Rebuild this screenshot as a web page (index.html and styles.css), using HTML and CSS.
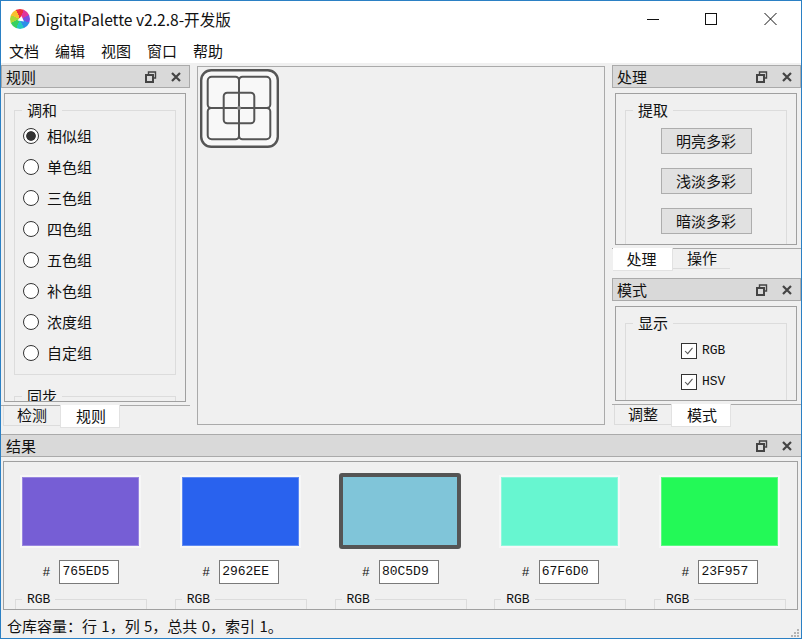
FILE: index.html
```html
<!DOCTYPE html>
<html lang="zh-CN">
<head>
    <meta charset="UTF-8">
    <title>DigitalPalette v2.2.8-开发版</title>
    <link rel="stylesheet" href="styles.css">
</head>
<body>
<div class="window">
    <header class="titlebar">
        <div class="app-icon"><svg viewBox="0 0 20 20" width="20" height="20"><path d="M11.5 7L14 12.5L7.5 11.5Z" fill="#fff"/></svg></div>
        <span class="app-title">DigitalPalette v2.2.8-开发版</span>
        <div class="win-btns">
            <svg viewBox="0 0 58 20" width="58" height="20"><path d="M0 10.5H12" stroke="#111" fill="none"/></svg>
            <svg viewBox="0 0 59 20" width="59" height="20"><rect x="0.5" y="4.5" width="11" height="11" stroke="#111" fill="none"/></svg>
            <svg viewBox="0 0 13 20" width="13" height="20"><path d="M0.5 4L12.5 16M12.5 4L0.5 16" stroke="#111" fill="none"/></svg>
        </div>
    </header>
    <nav class="menubar">
        <span>文档</span><span>编辑</span><span>视图</span><span>窗口</span><span>帮助</span>
    </nav>

    <main class="workspace">
        <section class="dock">
            <div class="dock-title"><span>规则</span>
                <svg class="dock-btn" viewBox="0 0 36 12" width="36" height="12"><use href="#dock-icons"/></svg>
            </div>
            <div class="panel panel-rules">
                <fieldset class="group group-rules">
                    <legend>调和</legend>
                    <label class="radio checked"><i></i>相似组</label>
                    <label class="radio"><i></i>单色组</label>
                    <label class="radio"><i></i>三色组</label>
                    <label class="radio"><i></i>四色组</label>
                    <label class="radio"><i></i>五色组</label>
                    <label class="radio"><i></i>补色组</label>
                    <label class="radio"><i></i>浓度组</label>
                    <label class="radio"><i></i>自定组</label>
                </fieldset>
                <fieldset class="group"><legend>同步</legend></fieldset>
            </div>
            <div class="tabs tabs-left">
                <span class="tab">检测</span><span class="tab active">规则</span>
            </div>
        </section>

        <section class="canvas">
            <svg class="selector" viewBox="0 0 80 80" width="80" height="80">
                <rect x="1.2" y="1.2" width="76.6" height="76.6" rx="10" fill="#f8f8f8" stroke="#555" stroke-width="2.4"/>
                <g fill="none" stroke="#555" stroke-width="2">
                    <path d="M39 39H11.2a3.5 3.5 0 0 1-3.5-3.5V11.7a4 4 0 0 1 4-4H35.5a3.5 3.5 0 0 1 3.5 3.5Z"/>
                    <path d="M39 39V11.2a3.5 3.5 0 0 1 3.5-3.5H66.3a4 4 0 0 1 4 4V35.5a3.5 3.5 0 0 1-3.5 3.5Z"/>
                    <path d="M39 39H66.8a3.5 3.5 0 0 1 3.5 3.5V66.3a4 4 0 0 1-4 4H42.5a3.5 3.5 0 0 1-3.5-3.5Z"/>
                    <path d="M39 39V66.8a3.5 3.5 0 0 1-3.5 3.5H11.7a4 4 0 0 1-4-4V42.5a3.5 3.5 0 0 1 3.5-3.5Z"/>
                    <rect x="23.7" y="23.7" width="30.6" height="30.6" rx="3.5"/>
                </g>
                <circle cx="39" cy="39" r="2" fill="#888"/>
            </svg>
        </section>

        <section class="dock dock-right">
            <div class="dock-title"><span>处理</span>
                <svg class="dock-btn" viewBox="0 0 36 12" width="36" height="12"><use href="#dock-icons"/></svg>
            </div>
            <div class="panel panel-process">
                <fieldset class="group group-fill">
                    <legend>提取</legend>
                    <div class="btn-stack">
                        <button class="btn">明亮多彩</button>
                        <button class="btn">浅淡多彩</button>
                        <button class="btn">暗淡多彩</button>
                    </div>
                </fieldset>
            </div>
            <div class="tabs tabs-right-top">
                <span class="tab active">处理</span><span class="tab">操作</span>
            </div>

            <div class="dock-title dock-title-second"><span>模式</span>
                <svg class="dock-btn" viewBox="0 0 36 12" width="36" height="12"><use href="#dock-icons"/></svg>
            </div>
            <div class="panel panel-mode">
                <fieldset class="group group-fill">
                    <legend>显示</legend>
                    <div class="check-stack">
                        <label class="check"><svg viewBox="0 0 16 16" width="16" height="16"><path d="M3.5 8L6.5 11L12 4.5" fill="none" stroke="#555" stroke-width="1.2"/></svg>RGB</label>
                        <label class="check"><svg viewBox="0 0 16 16" width="16" height="16"><path d="M3.5 8L6.5 11L12 4.5" fill="none" stroke="#555" stroke-width="1.2"/></svg>HSV</label>
                    </div>
                </fieldset>
            </div>
            <div class="tabs tabs-right-bottom">
                <span class="tab">调整</span><span class="tab active">模式</span>
            </div>
        </section>
    </main>

    <section class="results">
        <div class="dock-title dock-title-wide"><span>结果</span>
            <svg class="dock-btn" viewBox="0 0 36 12" width="36" height="12"><use href="#dock-icons"/></svg>
        </div>
        <div class="panel panel-results">
            <div class="color-col">
                <div class="swatch-wrap"><div class="swatch sw-1"></div></div>
                <div class="hex-row"><span>#</span><span class="hex">765ED5</span></div>
                <fieldset class="group group-rgb"><legend>RGB</legend></fieldset>
            </div>
            <div class="color-col">
                <div class="swatch-wrap"><div class="swatch sw-2"></div></div>
                <div class="hex-row"><span>#</span><span class="hex">2962EE</span></div>
                <fieldset class="group group-rgb"><legend>RGB</legend></fieldset>
            </div>
            <div class="color-col">
                <div class="swatch-wrap"><div class="swatch sw-3 selected"></div></div>
                <div class="hex-row"><span>#</span><span class="hex">80C5D9</span></div>
                <fieldset class="group group-rgb"><legend>RGB</legend></fieldset>
            </div>
            <div class="color-col">
                <div class="swatch-wrap"><div class="swatch sw-4"></div></div>
                <div class="hex-row"><span>#</span><span class="hex">67F6D0</span></div>
                <fieldset class="group group-rgb"><legend>RGB</legend></fieldset>
            </div>
            <div class="color-col">
                <div class="swatch-wrap"><div class="swatch sw-5"></div></div>
                <div class="hex-row"><span>#</span><span class="hex">23F957</span></div>
                <fieldset class="group group-rgb"><legend>RGB</legend></fieldset>
            </div>
        </div>
    </section>

    <footer class="statusbar">
        <span>仓库容量：行 1，列 5，总共 0，索引 1。</span>
        <svg class="grip" viewBox="0 0 10 10" width="10" height="10" fill="#b4b4b4">
            <rect x="7" y="1" width="2" height="2"/>
            <rect x="4" y="4" width="2" height="2"/><rect x="7" y="4" width="2" height="2"/>
            <rect x="1" y="7" width="2" height="2"/><rect x="4" y="7" width="2" height="2"/><rect x="7" y="7" width="2" height="2"/>
        </svg>
    </footer>
</div>

<svg width="0" height="0" class="defs">
    <g id="dock-icons" fill="none" stroke="#444">
        <path d="M3.5 3V1H10.5V7H8.5" stroke-width="1.4"/>
        <rect x="1" y="4" width="7" height="7" stroke-width="2"/>
        <path d="M27 2L35 10M35 2L27 10" stroke-width="2.2"/>
    </g>
</svg>
</body>
</html>
```

FILE: styles.css
```css
* {
    box-sizing: border-box;
}
html, body {
    margin: 0;
    padding: 0;
}
body {
    width: 802px;
    height: 639px;
    overflow: hidden;
    font-family: "Noto Sans CJK SC", "Noto Sans", sans-serif;
    font-size: 15px;
    color: #111;
}
.defs {
    position: absolute;
}
.window {
    width: 802px;
    height: 639px;
    display: flex;
    flex-direction: column;
    background-color: #f0f0f0;
    border: 1px solid #2b80c4;
    overflow: hidden;
}

/* title and menu */
.titlebar {
    height: 38px;
    flex: none;
    display: flex;
    align-items: center;
    padding-left: 9px;
    padding-bottom: 2px;
    background-color: #fff;
}
.app-icon {
    width: 20px;
    height: 20px;
    margin-right: 5px;
    border-radius: 50%;
    background: conic-gradient(#ee2f3c 0 22deg, #e0359c 22deg 67deg, #7a4fe0 67deg 112deg, #2d8fe8 112deg 157deg, #25c8c0 157deg 202deg, #38d060 202deg 247deg, #a8d838 247deg 292deg, #f8c030 292deg 337deg, #ee2f3c 337deg);
}
.app-icon svg {
    display: block;
}
.app-title {
    font-size: 15.6px;
    line-height: 20px;
    flex: 1;
}
.win-btns {
    display: flex;
    padding-right: 24px;
}
.menubar {
    height: 24px;
    flex: none;
    display: flex;
    gap: 16px;
    padding-left: 8px;
    align-items: center;
    background-color: #fff;
    line-height: 24px;
}

/* main area */
.workspace {
    height: 370px;
    flex: none;
    display: flex;
    padding-top: 2px;
}
.dock {
    width: 189px;
    flex: none;
    display: flex;
    flex-direction: column;
}
.dock-right {
    margin-left: 7px;
}
.dock-title {
    height: 23px;
    flex: none;
    display: flex;
    justify-content: space-between;
    align-items: center;
    padding: 0 8px 0 4px;
    background-color: #d9d9d9;
    border: 1px solid #aaa;
    line-height: 21px;
}
.dock-title-second {
    margin-top: 7px;
}
.dock-title-wide {
    border-left: none;
    border-right: none;
    padding-left: 5px;
    padding-right: 9px;
}
.panel {
    border: 1px solid #a0a0a0;
    overflow: hidden;
    flex: none;
}
.dock .panel {
    margin: 5px 4px 3px 3px;
}
.panel-rules {
    height: 309px;
    padding: 7px 9px 0;
}
.panel-process {
    height: 152px;
    padding: 7px 9px 0;
}
.panel-mode {
    height: 95px;
    padding: 7px 9px 0;
}

/* group boxes */
.group {
    margin: 0;
    padding: 0;
    border: 1px solid #dcdcdc;
    min-width: 0;
}
.group legend {
    margin-left: 7px;
    padding: 0 5px;
    line-height: 18px;
}
.group-rules {
    height: 274px;
    margin-bottom: 12px;
    padding-top: 1px;
}
.group-fill {
    height: 200px;
}
.radio {
    display: flex;
    align-items: center;
    height: 31px;
    gap: 8px;
    padding-left: 8px;
}
.radio i {
    width: 16px;
    height: 16px;
    border: 1px solid #333;
    border-radius: 50%;
    background-color: #fff;
}
.radio.checked i {
    background: radial-gradient(circle, #333 0, #333 4.4px, #fff 5.2px);
}

/* right dock contents */
.btn-stack {
    display: flex;
    flex-direction: column;
    align-items: center;
    gap: 14px;
    padding-top: 9px;
}
.btn {
    width: 91px;
    height: 26px;
    padding: 0;
    border: 1px solid #adadad;
    background-color: #e1e1e1;
    font: inherit;
    line-height: 24px;
    color: #111;
}
.check-stack {
    padding: 3px 0 0 55px;
}
.check {
    display: flex;
    align-items: center;
    gap: 5px;
    height: 31px;
    font-family: "Liberation Mono", monospace;
    font-size: 13px;
}
.check svg {
    border: 1px solid #333;
    background-color: #fff;
}

/* tabs */
.tabs {
    display: flex;
    height: 23px;
    flex: none;
    border-top: 1px solid #aaa;
    padding-left: 2px;
}
.tab {
    width: 57px;
    height: 20px;
    line-height: 18px;
    text-align: center;
    border-left: 1px solid #dcdcdc;
    border-bottom: 1px solid #dcdcdc;
}
.tab.active {
    width: 60px;
    height: 23px;
    margin-top: -1px;
    padding-left: 2px;
    background-color: #fff;
    border: 1px solid #e2e2e2;
    border-top: none;
    line-height: 22px;
}
.tabs-right-top {
    padding-left: 1px;
}
.tabs-right-top .tab.active {
    padding: 0 2px 0 0;
}
.tabs-right-top .tab {
    border-left: none;
    padding-left: 1px;
}

/* canvas */
.canvas {
    width: 408px;
    height: 359px;
    flex: none;
    margin: 1px 0 0 7px;
    padding: 2px;
    border: 1px solid #aaa;
}
.selector {
    display: block;
}

/* results */
.results {
    flex: none;
    padding-top: 1px;
}
.panel-results {
    height: 149px;
    margin: 4px 3px 0 2px;
    padding: 11px 17px 0;
    display: flex;
    justify-content: space-between;
}
.color-col {
    width: 120px;
    display: flex;
    flex-direction: column;
    align-items: center;
}
.swatch-wrap {
    height: 76px;
    flex: none;
    display: flex;
    align-items: center;
    padding-right: 1px;
}
.swatch {
    width: 117px;
    height: 69px;
    box-shadow: inset 0 0 0 1px rgba(255, 255, 255, 0.25), 0 0 0 2px #f7f7f7;
}
.swatch.selected {
    width: 122px;
    height: 76px;
    border: 4px solid #555;
    border-radius: 3px;
    box-shadow: none;
}
.sw-1 { background-color: #765ed5; }
.sw-2 { background-color: #2962ee; }
.sw-3 { background-color: #80c5d9; }
.sw-4 { background-color: #67f6d0; }
.sw-5 { background-color: #23f957; }
.hex-row {
    display: flex;
    flex: none;
    align-items: center;
    gap: 9px;
    margin-top: 11px;
    font-family: "Liberation Mono", monospace;
    font-size: 13px;
}
.hex {
    width: 60px;
    height: 24px;
    padding-left: 2px;
    line-height: 22px;
    background-color: #fff;
    border: 1px solid #7a7a7a;
}
.group-rgb {
    width: 132px;
    flex: none;
    height: 40px;
    margin-top: 5px;
    font-family: "Liberation Mono", monospace;
    font-size: 13px;
}
.group-rgb legend {
    margin-left: 6px;
    padding-top: 2px;
}

/* status */
.statusbar {
    flex: 1;
    display: flex;
    align-items: center;
    justify-content: space-between;
    padding: 2px 2px 0 6px;
    position: relative;
    word-spacing: 1px;
}
.grip {
    position: absolute;
    right: 1px;
    bottom: 0;
}
```
